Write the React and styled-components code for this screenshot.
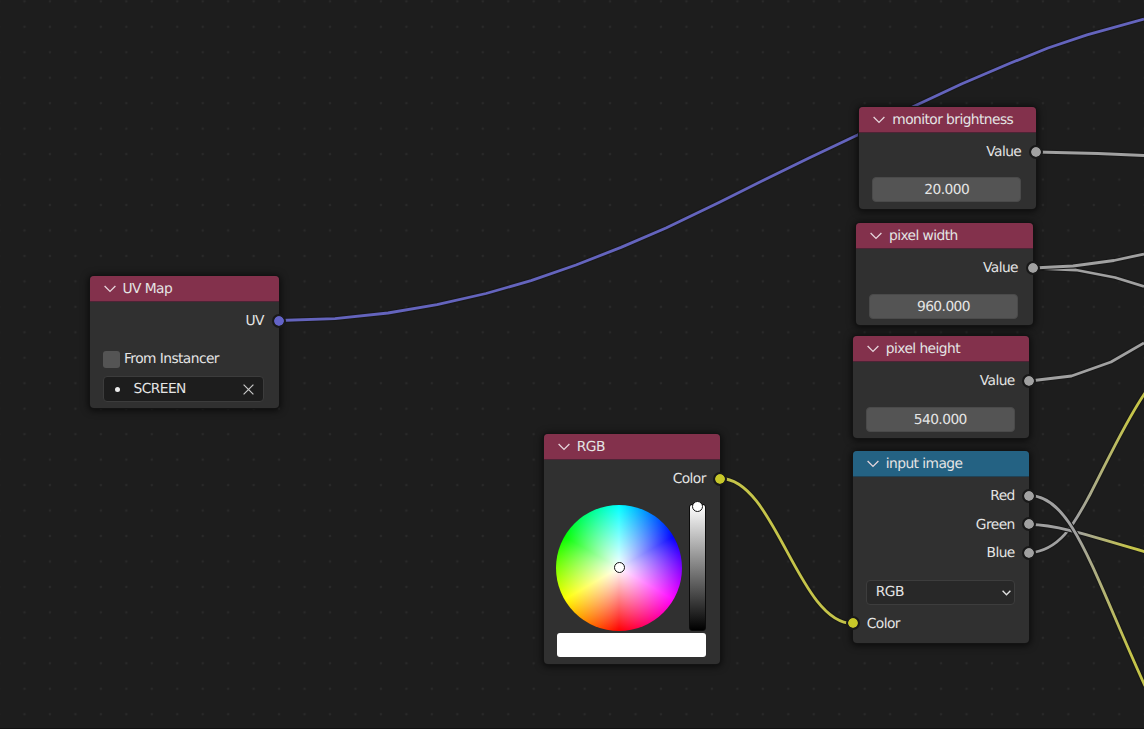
import React from "react";
import styled, { createGlobalStyle } from "styled-components";

const GlobalStyle = createGlobalStyle`
  body {
    margin: 0;
    background: #1d1d1d;
    overflow: hidden;
  }
  * {
    box-sizing: border-box;
  }
`;

const Canvas = styled.main`
  position: relative;
  width: 1144px;
  height: 729px;
  overflow: hidden;
  background: #1d1d1d;
  border-bottom: 1px solid #121212;
  color: #e4e4e4;
  font-family: "DejaVu Sans", sans-serif;
  font-size: 13.8px;
  letter-spacing: -0.57px;
  line-height: 16px;
  text-rendering: geometricPrecision;
`;

const Wires = styled.svg`
  position: absolute;
  inset: 0;
  width: 1144px;
  height: 728px;
`;

const Node = styled.section`
  position: absolute;
  left: ${(p) => p.$x}px;
  top: ${(p) => p.$y}px;
  width: ${(p) => p.$w}px;
  height: ${(p) => p.$h}px;
  display: flex;
  flex-direction: column;
  border-radius: 4px;
  background: #303030;
  box-shadow: 0 0 0 1px #131313, 0 1px 7px 2px rgba(0, 0, 0, 0.6);
`;

const headerColors = {
  input: { fill: "#83314c", edge: "#4d2436" },
  texture: { fill: "#246283", edge: "#204357" },
};

const Header = styled.header`
  display: flex;
  align-items: center;
  gap: 7px;
  flex: none;
  height: 26px;
  padding: 0 0 0 14px;
  border-radius: 4px 4px 0 0;
  background: ${(p) => headerColors[p.$kind].fill};
  border-bottom: 1px solid ${(p) => headerColors[p.$kind].edge};
  white-space: nowrap;

  svg {
    margin-top: 1px;
  }
`;

const Body = styled.div`
  display: flex;
  flex-direction: column;
  padding: ${(p) => p.$top || 6}px 14.5px 0 13px;
`;

const Output = styled.div`
  position: relative;
  display: flex;
  align-items: center;
  justify-content: flex-end;
  height: ${(p) => p.$h || 26}px;
`;

const Input = styled(Output)`
  justify-content: flex-start;
  padding-left: 1px;
`;

// sockets straddle the edge of their node
const Socket = styled.i`
  position: absolute;
  top: 50%;
  ${(p) => (p.$side === "left" ? "left: -20px;" : "right: -21.6px;")}
  width: 14px;
  height: 14px;
  margin-top: -7.5px;
  border-radius: 50%;
  border: 2px solid #191919;
  background: ${(p) => p.$color};
  background-clip: padding-box;
`;

const Field = styled.div`
  height: 25px;
  margin-top: 12.3px;
  border-radius: 4px;
  background: #545454;
  border: 1px solid #4a4a4a;
  line-height: 24px;
  text-align: center;
`;

const Check = styled.label`
  display: flex;
  align-items: center;
  gap: 4px;
  height: 18px;
  margin-top: 16px;
`;

const Box = styled.span`
  width: 17.5px;
  height: 17px;
  border-radius: 3px;
  background: #545454;
`;

const TextField = styled.div`
  display: flex;
  align-items: center;
  height: 26px;
  margin-top: 8px;
  padding: 0 9px 0 11px;
  border-radius: 4px;
  border: 1px solid #3c3c3c;
  background: #1d1d1d;

  span {
    flex: 1;
    padding: 0 0 1px 14px;
  }
`;

const Dot = styled.b`
  width: 5px;
  height: 5px;
  border-radius: 50%;
  background: #ececec;
`;

const Select = styled.div`
  display: flex;
  align-items: center;
  justify-content: space-between;
  height: 25px;
  margin: 12px 0 6px;
  padding: 0 3px 1px 9px;
  border-radius: 4px;
  border: 1px solid #3d3d3d;
  background: #282828;

  svg {
    margin-top: 3px;
  }
`;

const Picker = styled.div`
  display: flex;
  justify-content: space-between;
  height: 127px;
  margin-top: 12px;
`;

const Wheel = styled.div`
  display: grid;
  place-items: center;
  width: 126px;
  height: 126px;
  margin: 0.5px 0 0 -0.5px;
  border-radius: 50%;
  background: radial-gradient(closest-side, #fff, rgba(255, 255, 255, 0)),
    conic-gradient(#0ff, #00f, #f0f, #f00, #ff0, #0f0, #0ff);
`;

const ValueBar = styled.div`
  display: flex;
  justify-content: center;
  width: 17px;
  border: 1px solid #0c0c0c;
  border-radius: 3px;
  background: linear-gradient(#fff, #000);
`;

const Handle = styled.span`
  flex: none;
  width: 11px;
  height: 11px;
  margin-top: ${(p) => p.$shift || 0}px;
  border-radius: 50%;
  border: 1.5px solid #111;
  background: #fff;
`;

const Swatch = styled.div`
  height: 24px;
  margin-top: 2px;
  border-radius: 3px;
  background: #fff;
`;

const GRAY = "#a1a1a1";
const YELLOW = "#c7c729";
const VIOLET = "#6363c7";

const Chevron = () => (
  <svg width="12" height="8" viewBox="0 0 12 8" fill="none" stroke="#e6d5dc" strokeWidth="1.3">
    <path d="M0.6 1 L6 6.4 L11.4 1" />
  </svg>
);

const links = [
  {
    d: "M279 320.5 L335 318.6 L388 313 L437 304.7 L486 293.5 L531 280.6 L576 265 L621 247.4 L666 228 L719 202.5 L764 180 L809 158 L857.5 135 L914 106.3 L962 83.8 L1010 63.3 L1048 48 L1087 34.8 L1144 19",
    color: "#6464bd",
  },
  { d: "M720.5 478.5 C775 478.5 798.5 623.5 852.7 623.5", color: "#c5c44a" },
  { d: "M1036 152 L1098 153.5 L1144 155.5", color: GRAY },
  { d: "M1033 268 L1076 270 L1115 277.5 L1144 286.5", color: GRAY },
  { d: "M1033 268 L1073 266 L1114 260.5 L1144 254", color: GRAY },
  { d: "M1029.5 381 L1071.5 376 L1111 362 L1144 343", color: GRAY },
  { d: "M1029.7 553 C1062 550 1076 520 1090 494.5 C1106 464 1124 424 1145 393", color: "url(#fade)" },
  { d: "M1029.7 524.5 C1055 524.5 1085 534 1145 551.8", color: "url(#fade)" },
  { d: "M1029.7 495.7 C1072 496 1092 570 1145 686", color: "url(#fade)" },
];

const ValueNode = ({ x, y, h = 102, title, value }) => (
  <Node $x={x} $y={y} $w={176.5} $h={h}>
    <Header $kind="input">
      <Chevron />
      {title}
    </Header>
    <Body>
      <Output>
        Value
        <Socket $color={GRAY} />
      </Output>
      <Field>{value}</Field>
    </Body>
  </Node>
);

const App = () => (
  <>
    <GlobalStyle />
    <Canvas>
      <Wires>
        <defs>
          <pattern id="grid" x="11.8" y="-11.4" width="25.46" height="25.46" patternUnits="userSpaceOnUse">
            <circle cx="12.7" cy="12.7" r="1.2" fill="#292929" />
          </pattern>
          <linearGradient id="fade" gradientUnits="userSpaceOnUse" x1="1076" y1="0" x2="1130" y2="0">
            <stop offset="0" stopColor={GRAY} />
            <stop offset="1" stopColor="#c5c44a" />
          </linearGradient>
        </defs>
        <rect width="1144" height="728" fill="url(#grid)" />
        {links.map((link) => (
          <g key={link.d} fill="none" strokeLinejoin="round">
            <path d={link.d} stroke="#181818" strokeWidth="5" />
            <path d={link.d} stroke={link.color} strokeWidth="2.8" />
          </g>
        ))}
      </Wires>

      <Node $x={89.5} $y={276} $w={189} $h={131.5}>
        <Header $kind="input">
          <Chevron />
          UV Map
        </Header>
        <Body>
          <Output>
            UV
            <Socket $color={VIOLET} />
          </Output>
          <Check>
            <Box />
            From Instancer
          </Check>
          <TextField>
            <Dot />
            <span>SCREEN</span>
            <svg width="11" height="11" viewBox="0 0 11 11" stroke="#c8c8c8" strokeWidth="1.2">
              <path d="M0.6 0.6 L10.4 10.4 M10.4 0.6 L0.6 10.4" />
            </svg>
          </TextField>
        </Body>
      </Node>

      <Node $x={543.8} $y={434} $w={176.5} $h={230}>
        <Header $kind="input">
          <Chevron />
          RGB
        </Header>
        <Body>
          <Output>
            Color
            <Socket $color={YELLOW} />
          </Output>
          <Picker>
            <Wheel>
              <Handle />
            </Wheel>
            <ValueBar>
              <Handle $shift={-4} />
            </ValueBar>
          </Picker>
          <Swatch />
        </Body>
      </Node>

      <ValueNode x={859.3} y={107} title="monitor brightness" value="20.000" />
      <ValueNode x={856} y={223.3} title="pixel width" value="960.000" />
      <ValueNode x={852.8} y={336.4} title="pixel height" value="540.000" />

      <Node $x={852.8} $y={451} $w={176.5} $h={191.5}>
        <Header $kind="texture">
          <Chevron />
          input image
        </Header>
        <Body $top={5}>
          {["Red", "Green", "Blue"].map((name) => (
            <Output key={name} $h={28.6}>
              {name}
              <Socket $color={GRAY} />
            </Output>
          ))}
          <Select>
            RGB
            <svg width="9" height="6" viewBox="0 0 9 6" fill="none" stroke="#e0e0e0" strokeWidth="1.4">
              <path d="M0.6 0.8 L4.5 4.7 L8.4 0.8" />
            </svg>
          </Select>
          <Input>
            Color
            <Socket $color={YELLOW} $side="left" />
          </Input>
        </Body>
      </Node>
    </Canvas>
  </>
);

export default App;
